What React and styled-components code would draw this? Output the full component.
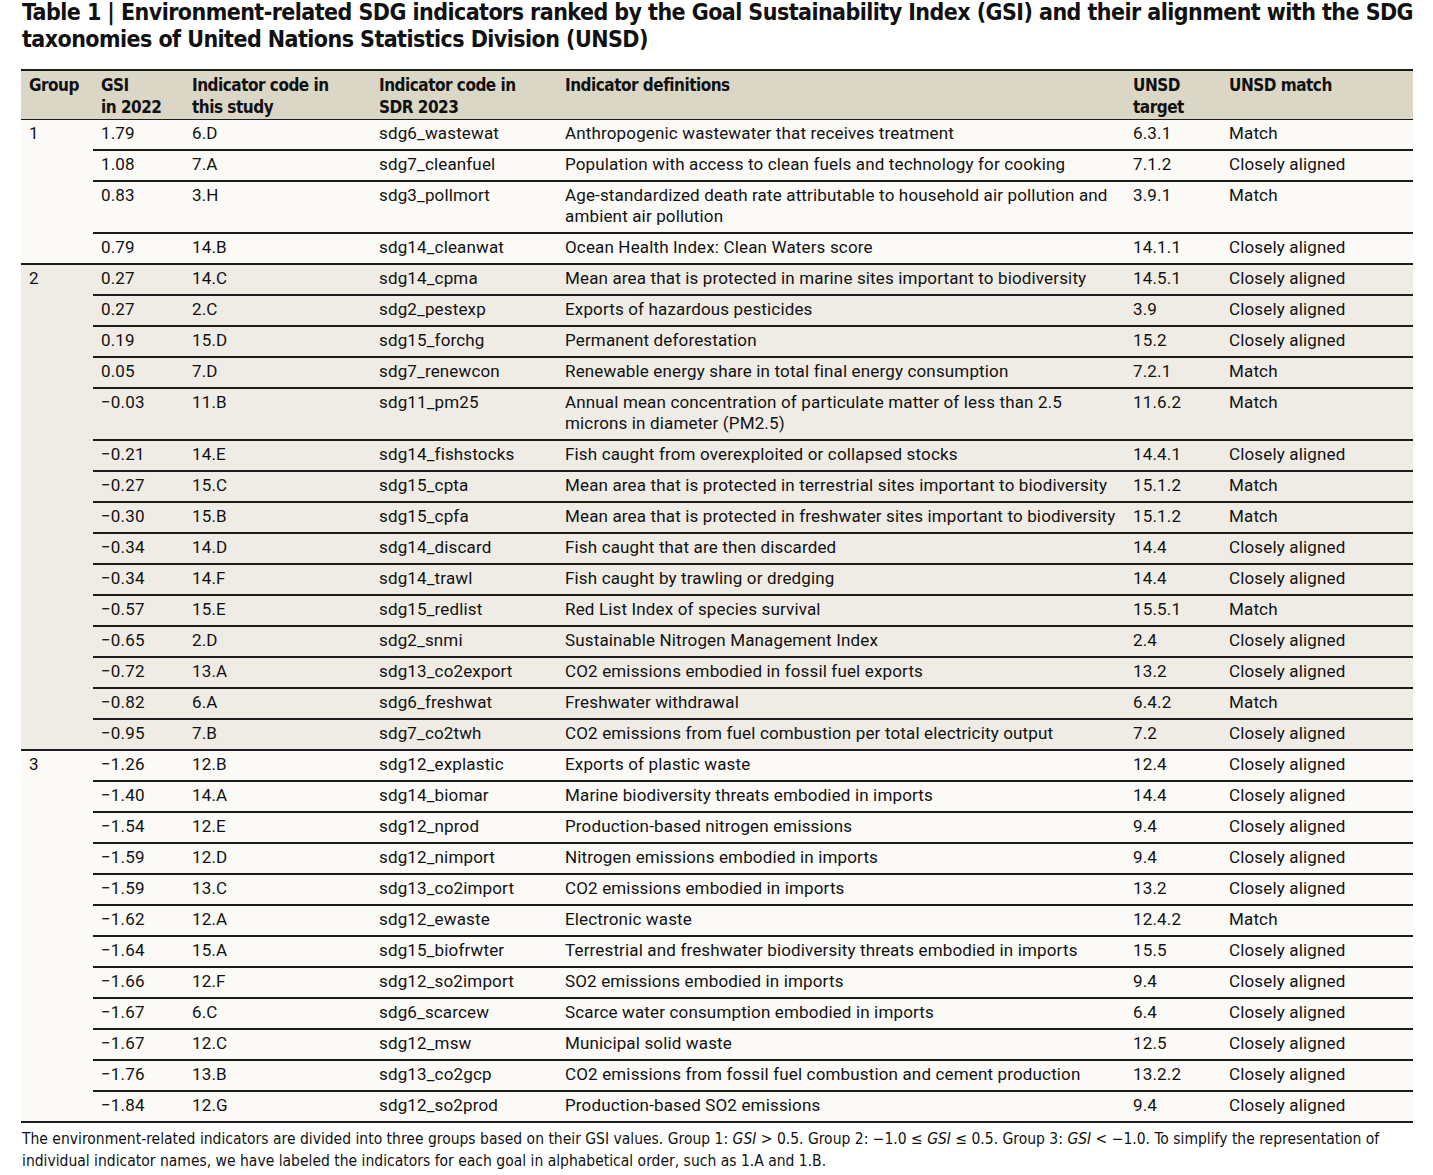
import React from "react";
import styled, { createGlobalStyle } from "styled-components";

const GlobalStyle = createGlobalStyle`
  body {
    margin: 0;
    background: #ffffff;
    color: #111111;
    font-family: "Roboto", "Liberation Sans", sans-serif;
  }
`;

const Page = styled.div`
  width: 1392px;
  padding: 0 0 0 21px;
`;

const Title = styled.h1`
  margin: -1px 0 0 1px;
  font-family: "DejaVu Sans Condensed", "Liberation Sans", sans-serif;
  font-weight: 700;
  font-size: 23px;
  letter-spacing: -0.56px;
  line-height: 27px;
  white-space: nowrap;
  color: #111111;
`;

const Table = styled.table`
  margin-top: 16px;
  width: 1392px;
  border-collapse: collapse;
  table-layout: fixed;
  border-top: 2px solid #1c1c1c;
  border-bottom: 2px solid #1c1c1c;
  font-size: 17px;
  letter-spacing: 0.15px;
  line-height: 21px;
`;

const Head = styled.th`
  background: #dad7c6;
  text-align: left;
  vertical-align: top;
  padding: 3px 8px 1px;
  font-family: "DejaVu Sans Condensed", "Liberation Sans", sans-serif;
  font-weight: 700;
  font-size: 17px;
  letter-spacing: -0.5px;
  line-height: 22px;
  border-bottom: 1.5px solid #1c1c1c;
`;

const Row = styled.tr`
  background: ${(p) => (p.$shaded ? "#efece5" : "#fbfaf7")};
`;

const Cell = styled.td`
  vertical-align: top;
  padding: 3px 8px 5px;
  border-bottom: ${(p) => (p.$last ? "none" : "2px solid #1c1c1c")};
  white-space: pre;
`;

const Note = styled.p`
  margin: 5px 0 0 1px;
  font-family: "DejaVu Sans Condensed", "Liberation Sans", sans-serif;
  font-size: 15.5px;
  line-height: 22px;
  white-space: nowrap;
`;

const cols = [72, 91, 187, 186, 568, 96, 192];

const groups = [
  {
    id: "1",
    rows: [
      ["1.79", "6.D", "sdg6_wastewat", "Anthropogenic wastewater that receives treatment", "6.3.1", "Match"],
      ["1.08", "7.A", "sdg7_cleanfuel", "Population with access to clean fuels and technology for cooking", "7.1.2", "Closely aligned"],
      ["0.83", "3.H", "sdg3_pollmort", "Age-standardized death rate attributable to household air pollution and\nambient air pollution", "3.9.1", "Match"],
      ["0.79", "14.B", "sdg14_cleanwat", "Ocean Health Index: Clean Waters score", "14.1.1", "Closely aligned"],
    ],
  },
  {
    id: "2",
    shaded: true,
    rows: [
      ["0.27", "14.C", "sdg14_cpma", "Mean area that is protected in marine sites important to biodiversity", "14.5.1", "Closely aligned"],
      ["0.27", "2.C", "sdg2_pestexp", "Exports of hazardous pesticides", "3.9", "Closely aligned"],
      ["0.19", "15.D", "sdg15_forchg", "Permanent deforestation", "15.2", "Closely aligned"],
      ["0.05", "7.D", "sdg7_renewcon", "Renewable energy share in total final energy consumption", "7.2.1", "Match"],
      ["\u22120.03", "11.B", "sdg11_pm25", "Annual mean concentration of particulate matter of less than 2.5\nmicrons in diameter (PM2.5)", "11.6.2", "Match"],
      ["\u22120.21", "14.E", "sdg14_fishstocks", "Fish caught from overexploited or collapsed stocks", "14.4.1", "Closely aligned"],
      ["\u22120.27", "15.C", "sdg15_cpta", "Mean area that is protected in terrestrial sites important to biodiversity", "15.1.2", "Match"],
      ["\u22120.30", "15.B", "sdg15_cpfa", "Mean area that is protected in freshwater sites important to biodiversity", "15.1.2", "Match"],
      ["\u22120.34", "14.D", "sdg14_discard", "Fish caught that are then discarded", "14.4", "Closely aligned"],
      ["\u22120.34", "14.F", "sdg14_trawl", "Fish caught by trawling or dredging", "14.4", "Closely aligned"],
      ["\u22120.57", "15.E", "sdg15_redlist", "Red List Index of species survival", "15.5.1", "Match"],
      ["\u22120.65", "2.D", "sdg2_snmi", "Sustainable Nitrogen Management Index", "2.4", "Closely aligned"],
      ["\u22120.72", "13.A", "sdg13_co2export", "CO2 emissions embodied in fossil fuel exports", "13.2", "Closely aligned"],
      ["\u22120.82", "6.A", "sdg6_freshwat", "Freshwater withdrawal", "6.4.2", "Match"],
      ["\u22120.95", "7.B", "sdg7_co2twh", "CO2 emissions from fuel combustion per total electricity output", "7.2", "Closely aligned"],
    ],
  },
  {
    id: "3",
    rows: [
      ["\u22121.26", "12.B", "sdg12_explastic", "Exports of plastic waste", "12.4", "Closely aligned"],
      ["\u22121.40", "14.A", "sdg14_biomar", "Marine biodiversity threats embodied in imports", "14.4", "Closely aligned"],
      ["\u22121.54", "12.E", "sdg12_nprod", "Production-based nitrogen emissions", "9.4", "Closely aligned"],
      ["\u22121.59", "12.D", "sdg12_nimport", "Nitrogen emissions embodied in imports", "9.4", "Closely aligned"],
      ["\u22121.59", "13.C", "sdg13_co2import", "CO2 emissions embodied in imports", "13.2", "Closely aligned"],
      ["\u22121.62", "12.A", "sdg12_ewaste", "Electronic waste", "12.4.2", "Match"],
      ["\u22121.64", "15.A", "sdg15_biofrwter", "Terrestrial and freshwater biodiversity threats embodied in imports", "15.5", "Closely aligned"],
      ["\u22121.66", "12.F", "sdg12_so2import", "SO2 emissions embodied in imports", "9.4", "Closely aligned"],
      ["\u22121.67", "6.C", "sdg6_scarcew", "Scarce water consumption embodied in imports", "6.4", "Closely aligned"],
      ["\u22121.67", "12.C", "sdg12_msw", "Municipal solid waste", "12.5", "Closely aligned"],
      ["\u22121.76", "13.B", "sdg13_co2gcp", "CO2 emissions from fossil fuel combustion and cement production", "13.2.2", "Closely aligned"],
      ["\u22121.84", "12.G", "sdg12_so2prod", "Production-based SO2 emissions", "9.4", "Closely aligned"],
    ],
  },
];

function GroupRows({ group, isLastGroup }) {
  return group.rows.map((r, i) => {
    const last = isLastGroup && i === group.rows.length - 1;
    return (
      <Row key={group.id + i} $shaded={group.shaded}>
        {i === 0 && (
          <Cell rowSpan={group.rows.length} $last={isLastGroup}>
            {group.id}
          </Cell>
        )}
        {r.map((v, j) => (
          <Cell key={j} $last={last}>
            {v}
          </Cell>
        ))}
      </Row>
    );
  });
}

export default function App() {
  return (
    <Page>
      <GlobalStyle />
      <Title>
        Table 1 | Environment-related SDG indicators ranked by the Goal Sustainability Index (GSI) and their alignment with the SDG
        <br />
        taxonomies of United Nations Statistics Division (UNSD)
      </Title>
      <Table>
        <colgroup>
          {cols.map((w, i) => (
            <col key={i} style={{ width: w }} />
          ))}
        </colgroup>
        <thead>
          <tr>
            <Head>Group</Head>
            <Head>
              GSI
              <br />
              in 2022
            </Head>
            <Head>
              Indicator code in
              <br />
              this study
            </Head>
            <Head>
              Indicator code in
              <br />
              SDR 2023
            </Head>
            <Head>Indicator definitions</Head>
            <Head>
              UNSD
              <br />
              target
            </Head>
            <Head>UNSD match</Head>
          </tr>
        </thead>
        <tbody>
          {groups.map((g, i) => (
            <GroupRows key={g.id} group={g} isLastGroup={i === groups.length - 1} />
          ))}
        </tbody>
      </Table>
      <Note>
        The environment-related indicators are divided into three groups based on their GSI values. Group 1: <i>GSI</i>&nbsp;&gt;&nbsp;0.5. Group 2: −1.0&nbsp;≤&nbsp;<i>GSI</i>&nbsp;≤&nbsp;0.5. Group 3: <i>GSI</i>&nbsp;&lt;&nbsp;−1.0. To simplify the representation of
        <br />
        individual indicator names, we have labeled the indicators for each goal in alphabetical order, such as 1.A and 1.B.
      </Note>
    </Page>
  );
}
